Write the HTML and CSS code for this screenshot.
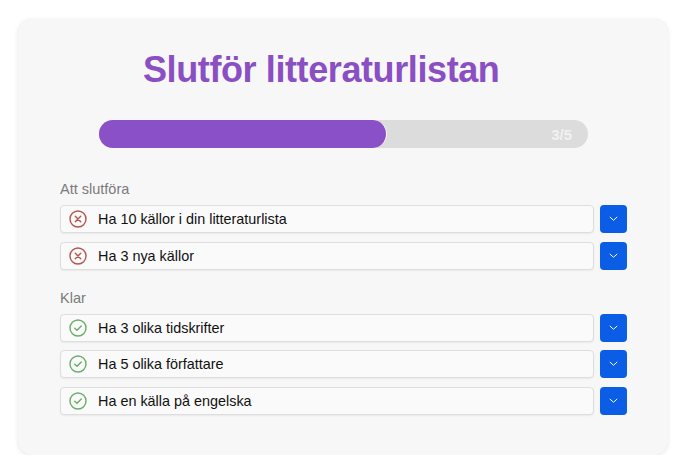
FILE: index.html
```html
<!DOCTYPE html>
<html lang="sv">
<head>
<meta charset="utf-8">
<link rel="stylesheet" href="styles.css">
</head>
<body>
<div class="card">
  <h1 class="title">Slutför litteraturlistan</h1>
  <div class="progress">
    <div class="fill" style="width: 288px"></div>
    <span class="count">3/5</span>
  </div>

  <div class="section-label">Att slutföra</div>
  <div class="list">
    <div class="item">
      <div class="row">
        <svg class="icon" viewBox="0 0 18 18"><circle cx="9" cy="9" r="8" fill="none" stroke="#b4564f" stroke-width="1.4"/><path d="M6.3 6.3 L11.7 11.7 M11.7 6.3 L6.3 11.7" stroke="#b4564f" stroke-width="1.4" stroke-linecap="round"/></svg>
        <span class="text">Ha 10 källor i din litteraturlista</span>
      </div>
      <button class="btn"><svg viewBox="0 0 10 6"><path d="M1.2 1 L5 4.4 L8.8 1" fill="none" stroke="#fff" stroke-width="1.1" stroke-linecap="round" stroke-linejoin="round"/></svg></button>
    </div>
    <div class="item">
      <div class="row">
        <svg class="icon" viewBox="0 0 18 18"><circle cx="9" cy="9" r="8" fill="none" stroke="#b4564f" stroke-width="1.4"/><path d="M6.3 6.3 L11.7 11.7 M11.7 6.3 L6.3 11.7" stroke="#b4564f" stroke-width="1.4" stroke-linecap="round"/></svg>
        <span class="text">Ha 3 nya källor</span>
      </div>
      <button class="btn"><svg viewBox="0 0 10 6"><path d="M1.2 1 L5 4.4 L8.8 1" fill="none" stroke="#fff" stroke-width="1.1" stroke-linecap="round" stroke-linejoin="round"/></svg></button>
    </div>
  </div>

  <div class="section-label second">Klar</div>
  <div class="list">
    <div class="item">
      <div class="row">
        <svg class="icon" viewBox="0 0 18 18"><circle cx="9" cy="9" r="8" fill="none" stroke="#6aae68" stroke-width="1.4"/><path d="M5.7 9.2 L8 11.3 L12.3 6.9" fill="none" stroke="#6aae68" stroke-width="1.4" stroke-linecap="round" stroke-linejoin="round"/></svg>
        <span class="text">Ha 3 olika tidskrifter</span>
      </div>
      <button class="btn"><svg viewBox="0 0 10 6"><path d="M1.2 1 L5 4.4 L8.8 1" fill="none" stroke="#fff" stroke-width="1.1" stroke-linecap="round" stroke-linejoin="round"/></svg></button>
    </div>
    <div class="item">
      <div class="row">
        <svg class="icon" viewBox="0 0 18 18"><circle cx="9" cy="9" r="8" fill="none" stroke="#6aae68" stroke-width="1.4"/><path d="M5.7 9.2 L8 11.3 L12.3 6.9" fill="none" stroke="#6aae68" stroke-width="1.4" stroke-linecap="round" stroke-linejoin="round"/></svg>
        <span class="text">Ha 5 olika författare</span>
      </div>
      <button class="btn"><svg viewBox="0 0 10 6"><path d="M1.2 1 L5 4.4 L8.8 1" fill="none" stroke="#fff" stroke-width="1.1" stroke-linecap="round" stroke-linejoin="round"/></svg></button>
    </div>
    <div class="item">
      <div class="row">
        <svg class="icon" viewBox="0 0 18 18"><circle cx="9" cy="9" r="8" fill="none" stroke="#6aae68" stroke-width="1.4"/><path d="M5.7 9.2 L8 11.3 L12.3 6.9" fill="none" stroke="#6aae68" stroke-width="1.4" stroke-linecap="round" stroke-linejoin="round"/></svg>
        <span class="text">Ha en källa på engelska</span>
      </div>
      <button class="btn"><svg viewBox="0 0 10 6"><path d="M1.2 1 L5 4.4 L8.8 1" fill="none" stroke="#fff" stroke-width="1.1" stroke-linecap="round" stroke-linejoin="round"/></svg></button>
    </div>
  </div>
</div>
</body>
</html>
```

FILE: styles.css
```css
html, body {
  margin: 0;
  padding: 0;
  background: #ffffff;
}

body {
  font-family: "Liberation Sans", Arial, sans-serif;
  padding: 19px 0 0 18px;
}

.card {
  box-sizing: border-box;
  width: 650px;
  height: 436px;
  background: #f7f7f7;
  border-radius: 14px;
  box-shadow: 0 1px 5px rgba(0, 0, 0, 0.09), 0 0 1px rgba(0, 0, 0, 0.07);
  padding: 31px 41px 0 42px;
}

.title {
  margin: 0 0 0 83px;
  font-size: 36px;
  line-height: 40px;
  font-weight: bold;
  color: #8a4fc3;
  letter-spacing: -0.4px;
}

.progress {
  position: relative;
  box-sizing: border-box;
  margin: 30px 39px 0 39px;
  height: 28px;
  border-radius: 14px;
  background: #dcdcdc;
  display: flex;
  align-items: center;
  justify-content: flex-end;
  padding-right: 16px;
}

.fill {
  position: absolute;
  left: 0;
  top: 0;
  bottom: 0;
  box-sizing: border-box;
  background: #8a50c8;
  border-radius: 14px;
  border-right: 1.5px solid #ffffff;
}

.count {
  position: relative;
  font-size: 15px;
  font-weight: bold;
  color: #f1f1f1;
}

.section-label {
  margin-top: 33px;
  font-size: 14.5px;
  line-height: 16px;
  color: #7b7b7b;
}

.section-label.second {
  margin-top: 20px;
}

.list {
  margin-top: 8px;
  display: flex;
  flex-direction: column;
  gap: 8.5px;
}

.item {
  display: flex;
  gap: 6px;
  height: 28px;
}

.row {
  box-sizing: border-box;
  width: 534px;
  height: 28px;
  display: flex;
  align-items: center;
  padding-left: 8px;
  background: #fafafa;
  border: 1.5px solid #dedede;
  border-radius: 4px;
  box-shadow: 0 1px 2px rgba(0, 0, 0, 0.06);
}

.icon {
  width: 18px;
  height: 18px;
  flex: none;
}

.text {
  margin-left: 11px;
  font-size: 14.4px;
  color: #111111;
}

.btn {
  box-sizing: border-box;
  width: 27px;
  height: 28px;
  padding: 0;
  border: none;
  border-radius: 4px;
  background: #0b5de6;
  display: flex;
  align-items: center;
  justify-content: center;
}

.btn svg {
  width: 9px;
  height: 6px;
}
```
